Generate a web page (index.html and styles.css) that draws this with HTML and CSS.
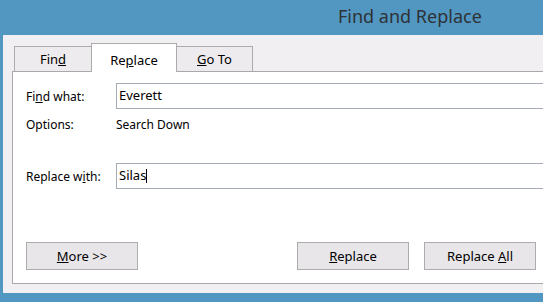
FILE: index.html
```html
<!DOCTYPE html>
<html lang="en">
<head>
    <meta charset="UTF-8">
    <title>Find and Replace</title>
    <link rel="stylesheet" href="styles.css">
</head>
<body>
    <div class="window">
        <div class="titlebar">Find and Replace</div>

        <div class="client">
            <div class="tabs">
                <span class="tab">Fin<u>d</u></span>
                <span class="tab active">Re<u>p</u>lace</span>
                <span class="tab"><u>G</u>o To</span>
            </div>

            <div class="panel">
                <div class="row">
                    <label>Fi<u>n</u>d what:</label>
                    <div class="field">Everett</div>
                </div>
                <div class="row options">
                    <label>Options:</label>
                    <span>Search Down</span>
                </div>
                <div class="row replace-row">
                    <label>Replace w<u>i</u>th:</label>
                    <div class="field">Silas<span class="caret"></span></div>
                </div>

                <div class="buttons">
                    <button><u>M</u>ore &gt;&gt;</button>
                    <div class="spacer"></div>
                    <button><u>R</u>eplace</button>
                    <button>Replace <u>A</u>ll</button>
                </div>
            </div>
        </div>
    </div>
</body>
</html>
```

FILE: styles.css
```css
body {
    margin: 0;
    font-family: "Noto Sans", "Open Sans", sans-serif;
    font-size: 12px;
    color: #000;
    overflow: hidden;
}
.window {
    width: 543px;
    height: 302px;
    background: #5297c2;
    padding-left: 3px;
    box-sizing: border-box;
    display: flex;
    flex-direction: column;
    overflow: hidden;
}
.titlebar {
    height: 35px;
    line-height: 33px;
    padding-left: 335px;
    font-size: 18px;
    color: #2e3236;
    box-sizing: border-box;
}
.client {
    height: 258px;
    background: #f2eff2;
    padding: 9px 0 0 9px;
    box-sizing: border-box;
    overflow: hidden;
}
.tabs {
    display: flex;
    align-items: flex-end;
    height: 27px;
    padding-left: 2px;
}
.tab {
    height: 25px;
    line-height: 24px;
    text-align: center;
    border: 1px solid #acacac;
    border-bottom: none;
    background: #eeebee;
    box-sizing: border-box;
    font-size: 13px;
}
.tab:nth-child(1) {
    width: 78px;
}
.tab:nth-child(3) {
    width: 77px;
    margin-left: -1px;
}
.tab.active {
    position: relative;
    z-index: 1;
    width: 86px;
    height: 29px;
    margin: 0 0 -1px -1px;
    line-height: 26px;
    background: #fff;
    padding-top: 3px;
}
.panel {
    width: 560px;
    height: 213px;
    background: #fff;
    border: 1px solid #a9a9a9;
    box-sizing: border-box;
    padding: 11px 0 0 13px;
}
.row {
    display: grid;
    grid-template-columns: 90px 1fr;
    align-items: center;
    height: 26px;
}
.options {
    height: 15px;
    margin-top: 7px;
}
.replace-row {
    margin-top: 32px;
}
.field {
    height: 26px;
    border: 1px solid #a6acb4;
    box-sizing: border-box;
    padding-left: 2px;
    line-height: 23px;
    font-size: 13px;
    background: #fff;
}
.caret {
    display: inline-block;
    width: 1px;
    height: 14px;
    background: #000;
    vertical-align: -3px;
}
.buttons {
    display: flex;
    margin-top: 53px;
    width: 510px;
}
.spacer {
    flex: 1;
}
button {
    width: 112px;
    height: 28px;
    margin-left: 15px;
    border: 1px solid #acacac;
    background: #e8e6e9;
    font-family: inherit;
    font-size: 13px;
    color: #000;
    padding: 0;
}
button:first-child {
    margin-left: 0;
}
```
